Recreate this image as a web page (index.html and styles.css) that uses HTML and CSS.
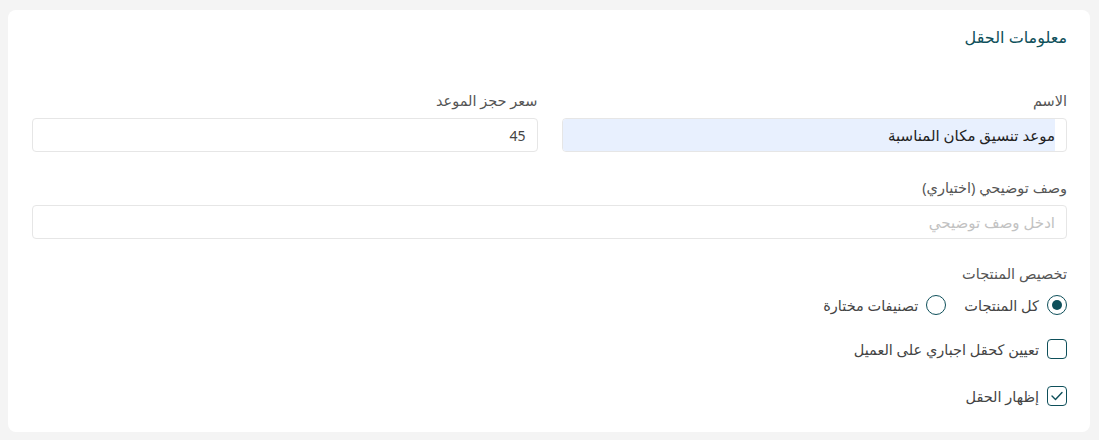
FILE: index.html
```html
<!DOCTYPE html>
<html lang="ar" dir="rtl">
<head>
<meta charset="utf-8">
<link rel="stylesheet" href="styles.css">
</head>
<body>
<div class="card">
  <h2 class="title">معلومات الحقل</h2>
  <div class="row">
    <div class="field">
      <label class="label">الاسم</label>
      <div class="input"><span class="autofill">موعد تنسيق مكان المناسبة</span></div>
    </div>
    <div class="field">
      <label class="label">سعر حجز الموعد</label>
      <div class="input"><span class="value">45</span></div>
    </div>
  </div>
  <div class="field desc">
    <label class="label">وصف توضيحي (اختياري)</label>
    <div class="input"><span class="placeholder">ادخل وصف توضيحي</span></div>
  </div>
  <div class="group">
    <div class="label">تخصيص المنتجات</div>
    <div class="radios">
      <span class="opt"><span class="radio checked"></span>كل المنتجات</span>
      <span class="opt"><span class="radio"></span>تصنيفات مختارة</span>
    </div>
  </div>
  <div class="check first"><span class="box"></span>تعيين كحقل اجباري على العميل</div>
  <div class="check second"><span class="box checked"><svg width="12" height="10" viewBox="0 0 12 10"><path d="M1 5 L4.5 8.5 L11 1.5" fill="none" stroke="#0e4f5a" stroke-width="1.4" stroke-linecap="round" stroke-linejoin="round"/></svg></span>إظهار الحقل</div>
</div>
</body>
</html>
```
FILE: styles.css
```css
html, body { margin: 0; padding: 0; }
body {
  background: #f4f4f4;
  font-family: "Noto Sans", "DejaVu Sans", sans-serif;
  width: 1099px;
  height: 440px;
  padding: 10px 9px 8px 8px;
  box-sizing: border-box;
}
.card {
  background: #fff;
  border-radius: 8px;
  padding: 17px 23px 25px 24px;
  height: 422px;
  box-sizing: border-box;
}
.title {
  margin: 0;
  font-size: 16px;
  font-weight: 500;
  color: #0e4f5a;
  line-height: 20px;
}
.row {
  display: flex;
  gap: 24px;
  margin-top: 43px;
}
.field { flex: 1; }
.label {
  display: block;
  font-size: 14.5px;
  color: #555;
  line-height: 20px;
  margin-bottom: 8px;
}
.input {
  height: 34px;
  border: 1px solid #e6e6e6;
  border-radius: 4px;
  box-sizing: border-box;
  display: flex;
  align-items: stretch;
  font-size: 15px;
  color: #333;
  padding-right: 11px;
  overflow: hidden;
}
.input span { display: flex; align-items: center; }
.autofill {
  flex: 1;
  background: #e8f0fe;
  color: #222;
}
.value { color: #444; font-size: 14px; }
.placeholder { color: #c2c2c2; }
.desc { margin-top: 25px; }
.group { margin-top: 24px; }
.group .label { margin-bottom: 12px; }
.radios {
  display: flex;
  gap: 18px;
  font-size: 14.5px;
  color: #444;
}
.opt { display: flex; align-items: center; gap: 8px; line-height: 20px; }
.radio {
  width: 20px;
  height: 20px;
  border: 1.5px solid #0e4f5a;
  border-radius: 50%;
  box-sizing: border-box;
  display: flex;
  align-items: center;
  justify-content: center;
}
.radio.checked::after {
  content: "";
  width: 10px;
  height: 10px;
  border-radius: 50%;
  background: #0e4f5a;
}
.check {
  display: flex;
  align-items: center;
  gap: 8px;
  font-size: 14.5px;
  color: #444;
  line-height: 20px;
}
.check.first { margin-top: 24px; }
.check.second { margin-top: 27px; }
.box {
  width: 20px;
  height: 20px;
  border: 1.5px solid #0e4f5a;
  border-radius: 4px;
  box-sizing: border-box;
  display: flex;
  align-items: center;
  justify-content: center;
}
```
